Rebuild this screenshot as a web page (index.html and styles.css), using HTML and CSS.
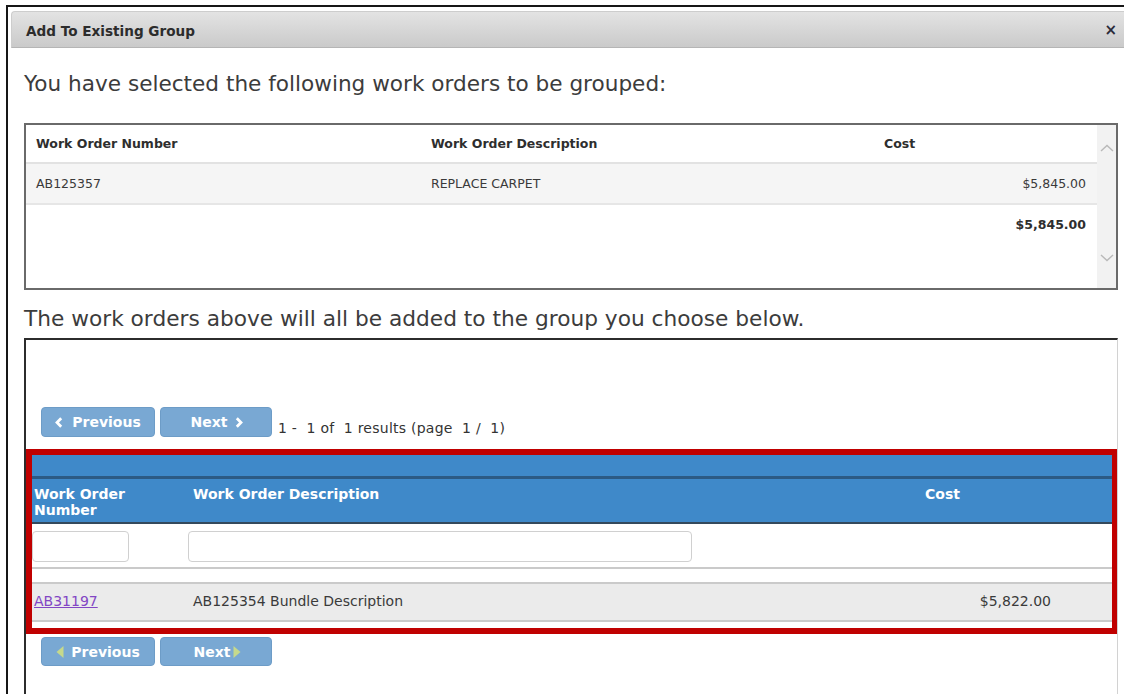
FILE: index.html
```html
<!DOCTYPE html>
<html lang="en">
<head>
<meta charset="utf-8">
<title>Add To Existing Group</title>
<link rel="stylesheet" href="styles.css">
</head>
<body>
<div class="frame">
  <div class="titlebar">
    <span class="title">Add To Existing Group</span>
    <span class="close">&times;</span>
  </div>

  <div class="content">
    <p class="lead lead-first">You have selected the following work orders to be grouped:</p>

    <div class="selected">
      <div class="sel-table">
        <div class="sel-row sel-head">
          <div class="cell">Work Order Number</div>
          <div class="cell">Work Order Description</div>
          <div class="cell">Cost</div>
        </div>
        <div class="sel-row sel-item">
          <div class="cell">AB125357</div>
          <div class="cell">REPLACE CARPET</div>
          <div class="cell money">$5,845.00</div>
        </div>
        <div class="sel-row sel-total">
          <div class="cell"></div>
          <div class="cell"></div>
          <div class="cell money">$5,845.00</div>
        </div>
      </div>
      <div class="scrollbar">
        <svg class="arrow" width="14" height="8" viewBox="0 0 14 8"><path d="M1 7 L7 1.5 L13 7" fill="none" stroke="#b9b9b9" stroke-width="1.4"/></svg>
        <svg class="arrow" width="14" height="8" viewBox="0 0 14 8"><path d="M1 1 L7 6.5 L13 1" fill="none" stroke="#b9b9b9" stroke-width="1.4"/></svg>
      </div>
    </div>

    <p class="lead lead-second">The work orders above will all be added to the group you choose below.</p>

    <div class="groups">
      <div class="pager pager-top">
        <button class="btn btn-prev" type="button">
          <svg width="8" height="11" viewBox="0 0 8 11"><path d="M6.2 1.2 L2 5.5 L6.2 9.8" fill="none" stroke="#fff" stroke-width="2.8"/></svg>
          <span>Previous</span>
        </button>
        <button class="btn btn-next" type="button">
          <span>Next</span>
          <svg width="8" height="11" viewBox="0 0 8 11"><path d="M1.8 1.2 L6 5.5 L1.8 9.8" fill="none" stroke="#fff" stroke-width="2.8"/></svg>
        </button>
        <span class="results">1 -&nbsp; 1 of&nbsp; 1 results (page&nbsp; 1 /&nbsp; 1)</span>
      </div>

      <div class="picker">
        <div class="band"></div>
        <div class="g-row g-head">
          <div class="cell">Work Order<br>Number</div>
          <div class="cell">Work Order Description</div>
          <div class="cell">Cost</div>
        </div>
        <div class="g-row g-filter">
          <div class="cell"><input class="f-num" type="text"></div>
          <div class="cell"><input class="f-desc" type="text"></div>
          <div class="cell"></div>
        </div>
        <div class="g-gap"></div>
        <div class="g-row g-item">
          <div class="cell"><a href="#">AB31197</a></div>
          <div class="cell">AB125354 Bundle Description</div>
          <div class="cell money">$5,822.00</div>
        </div>
      </div>

      <div class="pager pager-bottom">
        <button class="btn btn-prev" type="button">
          <svg width="8" height="12" viewBox="0 0 8 12"><path d="M7.5 0 L0.5 6 L7.5 12 Z" fill="#c6d98c"/></svg>
          <span>Previous</span>
        </button>
        <button class="btn btn-next" type="button">
          <span>Next</span>
          <svg width="8" height="12" viewBox="0 0 8 12"><path d="M0.5 0 L7.5 6 L0.5 12 Z" fill="#c6d98c"/></svg>
        </button>
      </div>
    </div>
  </div>
</div>
</body>
</html>
```

FILE: styles.css
```css
* {
  box-sizing: border-box;
}

html,
body {
  margin: 0;
  padding: 0;
  background: #fff;
}

body {
  width: 1124px;
  height: 694px;
  overflow: hidden;
  font-family: "DejaVu Sans", Verdana, sans-serif;
  color: #3a3a3a;
}

/* outer window edge */
.frame {
  margin: 5px 0 0 6px;
  height: 689px;
  overflow: hidden;
  border-top: 2px solid #161616;
  border-left: 2px solid #161616;
}

/* dialog title bar */
.titlebar {
  margin: 4px 0 0 3px;
  height: 37px;
  display: flex;
  align-items: center;
  justify-content: space-between;
  padding: 2px 7px 0 14px;
  background: linear-gradient(#e3e3e3, #cacaca);
  border: 1px solid #cdcdcd;
  border-bottom-color: #b5b5b5;
  border-right: none;
  border-top-left-radius: 4px;
}

.title {
  font-size: 13.6px;
  font-weight: bold;
  color: #2c2c2c;
}

.close {
  font-size: 15px;
  font-weight: bold;
  color: #2a2a3a;
  line-height: 1;
}

.content {
  padding: 0 6px 0 16px;
}

.lead {
  margin: 0;
  font-size: 21.6px;
  line-height: 26px;
  color: #3c3c3c;
}

.lead-first {
  margin-top: 23px;
}

.lead-second {
  margin-top: 16px;
  font-size: 21.7px;
}

/* selected work orders box */
.selected {
  margin-top: 26px;
  height: 167px;
  display: flex;
  border: 2px solid #6a6a6a;
}

.sel-table {
  flex: 1;
  font-size: 12.5px;
  color: #3a3a3a;
}

.sel-row {
  display: grid;
  grid-template-columns: 395px 453px 1fr;
  align-items: center;
}

.sel-row .cell {
  padding-left: 10px;
}

.sel-row .money {
  text-align: right;
  padding-right: 11px;
}

.sel-head {
  height: 39px;
  font-weight: bold;
  color: #2e2e2e;
  border-bottom: 2px solid #e2e2e2;
}

.sel-item {
  height: 41px;
  background: #f5f5f5;
  border-bottom: 2px solid #e6e6e6;
}

.sel-total {
  height: 38px;
  font-weight: bold;
  color: #2e2e2e;
}

.scrollbar {
  width: 19px;
  background: #f2f2f2;
  display: flex;
  flex-direction: column;
  justify-content: space-between;
  align-items: center;
  padding: 19px 0 26px;
}

/* group chooser box */
.groups {
  margin-top: 6px;
  height: 356px;
  border-top: 2px solid #2c2c2c;
  border-left: 2px solid #2c2c2c;
  border-right: 1px solid #d2d2d2;
  padding-top: 67px;
}

.pager {
  display: flex;
  align-items: flex-end;
  gap: 5px;
  padding-left: 15px;
}

.btn {
  display: flex;
  align-items: center;
  justify-content: center;
  height: 30px;
  padding: 0;
  margin: 0;
  border: 1px solid #6d9cc7;
  border-radius: 4px;
  background: #79a8d3;
  color: #fff;
  font-family: "DejaVu Sans", Verdana, sans-serif;
  font-size: 14px;
  font-weight: bold;
}

.btn-prev {
  width: 114px;
  gap: 9px;
}

.btn-next {
  width: 112px;
  gap: 8px;
}

.pager-top .btn-next {
  padding-left: 2px;
}

.results {
  margin-left: 1px;
  padding-bottom: 1px;
  font-size: 14px;
  line-height: 16px;
  letter-spacing: 0.25px;
  color: #333;
}

.pager-bottom {
  margin-top: 3px;
}

.pager-bottom .btn {
  height: 29px;
}

.pager-bottom .btn-prev {
  gap: 7px;
}

.pager-bottom .btn-next {
  gap: 3px;
  padding-left: 3px;
}

/* highlighted results grid */
.picker {
  margin-top: 12px;
  border: solid #c00000;
  border-width: 6px 5px 6px 6px;
  padding-bottom: 6px;
  background: #fff;
}

.band {
  height: 24px;
  background: #3f89c9;
  border-bottom: 3px solid #2c5a84;
}

.g-row {
  display: grid;
  grid-template-columns: 156px 732px 1fr;
}

.g-row .cell:nth-child(1) {
  padding-left: 2px;
}

.g-row .cell:nth-child(2),
.g-row .cell:nth-child(3) {
  padding-left: 5px;
}

.g-head {
  height: 45px;
  padding-top: 7px;
  background: #3f89c9;
  border-bottom: 2px solid #34495c;
  color: #fff;
  font-size: 14px;
  font-weight: bold;
  line-height: 16px;
}

.g-filter {
  height: 45px;
  padding-top: 7px;
  border-bottom: 2px solid #cacaca;
}

.g-filter .cell {
  padding-left: 0 !important;
}

.g-filter input {
  display: block;
  height: 31px;
  margin: 0;
  border: 1px solid #d0d0d0;
  border-radius: 4px;
  background: #fff;
}

.f-num {
  width: 97px;
}

.f-desc {
  width: 504px;
}

.g-gap {
  height: 15px;
  border-bottom: 2px solid #cacaca;
}

.g-item {
  height: 38px;
  align-items: center;
  padding-bottom: 3px;
  background: #ebebeb;
  border-bottom: 2px solid #cacaca;
  font-size: 14px;
  color: #3a3a3a;
}

.g-item a {
  color: #8246c4;
  text-decoration: underline;
}

.g-item .money {
  text-align: right;
  padding-right: 61px;
}
```
